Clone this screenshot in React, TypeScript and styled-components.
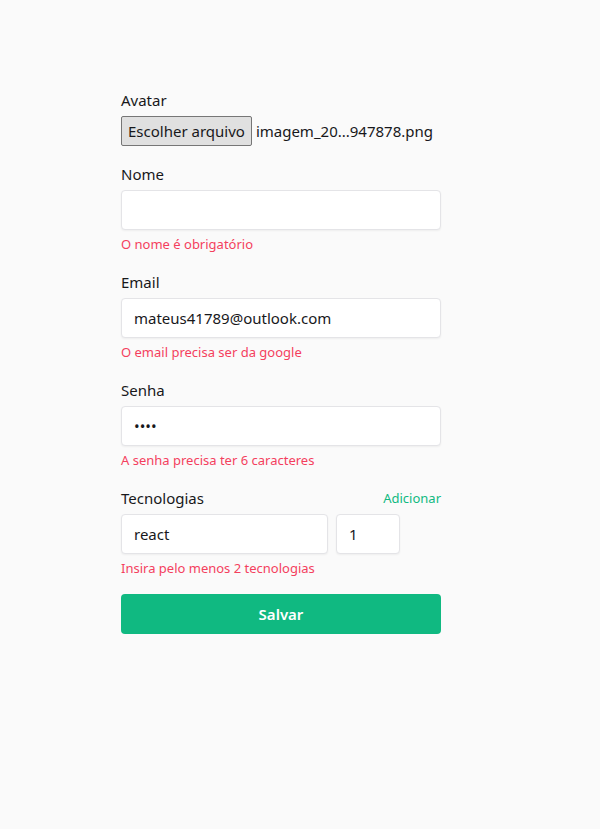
import styled, { createGlobalStyle } from "styled-components";

const GlobalStyle = createGlobalStyle`
  * {
    box-sizing: border-box;
  }
  html, body {
    margin: 0;
    padding: 0;
    background: #fafafa;
  }
  body {
    font-family: "Noto Sans", "Open Sans", sans-serif;
    color: #18181b;
  }
`;

const Main = styled.main`
  min-height: 829px;
  padding: 88px 0 0 121px;
`;

const Form = styled.form`
  width: 320px;
  display: flex;
  flex-direction: column;
  gap: 16px;
`;

const Field = styled.div`
  display: flex;
  flex-direction: column;
  gap: 4px;
`;

const LabelRow = styled.div`
  display: flex;
  align-items: center;
  justify-content: space-between;
`;

const Label = styled.label`
  font-size: 15px;
  line-height: 24px;
`;

const AddButton = styled.button`
  border: 0;
  background: none;
  padding: 0;
  font-family: inherit;
  font-size: 13px;
  line-height: 20px;
  color: #10b981;
  cursor: pointer;
`;

const FileRow = styled.div`
  display: flex;
  align-items: center;
  gap: 4px;
  height: 30px;
`;

const FileButton = styled.span`
  display: inline-flex;
  align-items: center;
  height: 30px;
  padding: 0 6px;
  border: 1px solid #767676;
  border-radius: 2px;
  background: #e0e0e0;
  font-size: 15px;
  color: #18181b;
`;

const FileName = styled.span`
  font-size: 15px;
`;

const Input = styled.input<{ $width?: number }>`
  width: ${(p) => (p.$width ? `${p.$width}px` : "100%")};
  height: 40px;
  padding: 0 12px;
  border: 1px solid #e4e4e7;
  border-radius: 4px;
  background: #fff;
  box-shadow: 0 1px 2px rgba(0, 0, 0, 0.05);
  font-family: inherit;
  font-size: 15px;
  color: #18181b;
  outline: none;
`;

const TechRow = styled.div`
  display: flex;
  gap: 8px;
`;

const ErrorText = styled.span`
  font-size: 13px;
  line-height: 20px;
  color: #f43f5e;
`;

const SubmitButton = styled.button`
  height: 40px;
  border: 0;
  border-radius: 4px;
  background: #10b981;
  color: #fff;
  font-family: inherit;
  font-size: 15px;
  font-weight: 600;
  cursor: pointer;
`;

const App = () => {
  return (
    <>
      <GlobalStyle />
      <Main>
        <Form onSubmit={(e) => e.preventDefault()}>
          <Field>
            <Label>Avatar</Label>
            <FileRow>
              <FileButton>Escolher arquivo</FileButton>
              <FileName>imagem_20...947878.png</FileName>
            </FileRow>
          </Field>

          <Field>
            <Label htmlFor="name">Nome</Label>
            <Input id="name" type="text" />
            <ErrorText>O nome é obrigatório</ErrorText>
          </Field>

          <Field>
            <Label htmlFor="email">Email</Label>
            <Input id="email" type="email" defaultValue="mateus41789@outlook.com" />
            <ErrorText>O email precisa ser da google</ErrorText>
          </Field>

          <Field>
            <Label htmlFor="password">Senha</Label>
            <Input id="password" type="password" defaultValue="1234" />
            <ErrorText>A senha precisa ter 6 caracteres</ErrorText>
          </Field>

          <Field>
            <LabelRow>
              <Label>Tecnologias</Label>
              <AddButton type="button">Adicionar</AddButton>
            </LabelRow>
            <TechRow>
              <Input $width={207} type="text" defaultValue="react" />
              <Input $width={64} type="number" defaultValue="1" />
            </TechRow>
            <ErrorText>Insira pelo menos 2 tecnologias</ErrorText>
          </Field>

          <SubmitButton type="submit">Salvar</SubmitButton>
        </Form>
      </Main>
    </>
  );
};

export default App;
